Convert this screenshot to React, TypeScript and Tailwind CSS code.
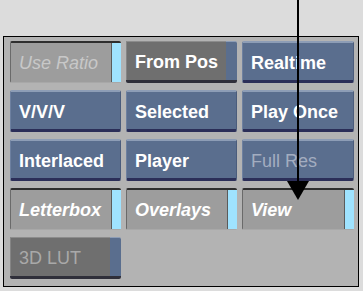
import React from "react";

type Kind = "blue" | "blueDim" | "toggleOff" | "toggleOn" | "pressed" | "pressedDim";

function Btn({ label, kind }: { label: string; kind: Kind }) {
  const font = { fontFamily: '"Liberation Sans", Arial, sans-serif' };
  if (kind === "blue" || kind === "blueDim") {
    return (
      <div
        className="h-[42px] rounded-[2px] bg-[#5a6e8e] border-t-2 border-t-[#8d9db6] border-b-[3px] border-b-[#2b2e58] border-l border-l-[#6d80a0] border-r border-r-[#4a5c7c] flex items-center pl-[8px] pt-[2px]"
        style={font}
      >
        <span
          className={
            "text-[18px] font-bold leading-none " +
            (kind === "blue" ? "text-white" : "text-[#a3adc0] font-normal")
          }
        >
          {label}
        </span>
      </div>
    );
  }
  if (kind === "toggleOff" || kind === "toggleOn") {
    return (
      <div className="h-[42px] flex rounded-[2px] border-t-2 border-t-[#2e2e2e] border-l border-l-[#6a6a6a] border-b border-b-[#a8a8a8]" style={font}>
        <div className="flex-1 bg-[#9d9d9d] flex items-center pl-[8px] pt-[1px]">
          <span
            className={
              "text-[18px] italic leading-none " +
              (kind === "toggleOn" ? "text-white font-bold" : "text-[#c8c8c8]")
            }
          >
            {label}
          </span>
        </div>
        <div className="w-[10px] bg-[#9fe3ff] border-l border-l-[#5b5b5b]" />
      </div>
    );
  }
  return (
    <div className="h-[42px] flex rounded-[2px] border-b-[3px] border-b-[#2f2f3a]" style={font}>
      <div className="flex-1 bg-[#6f6f6f] border-t border-t-[#8c8c8c] border-l border-l-[#858585] flex items-center pl-[8px] pt-[2px]">
        <span
          className={
            "text-[18px] leading-none " +
            (kind === "pressed" ? "text-white font-bold" : "text-[#a9a9a9]")
          }
        >
          {label}
        </span>
      </div>
      <div className="w-[11px] bg-[#5a6e8e] border-t border-t-[#8d9db6] rounded-tr-[2px]" />
    </div>
  );
}

export default function App() {
  return (
    <div className="relative w-[363px] h-[291px] bg-[#dcdcdc] overflow-hidden pt-[36px] pl-[3px]">
      <div className="w-[356px] h-[251px] border border-black bg-[#b3b3b3] pl-[6px] pt-[4px]">
        <div className="grid grid-cols-[111px_111px_112px] gap-x-[5px] gap-y-[7px]">
          <Btn label="Use Ratio" kind="toggleOff" />
          <Btn label="From Pos" kind="pressed" />
          <Btn label="Realtime" kind="blue" />
          <Btn label="V/V/V" kind="blue" />
          <Btn label="Selected" kind="blue" />
          <Btn label="Play Once" kind="blue" />
          <Btn label="Interlaced" kind="blue" />
          <Btn label="Player" kind="blue" />
          <Btn label="Full Res" kind="blueDim" />
          <Btn label="Letterbox" kind="toggleOn" />
          <Btn label="Overlays" kind="toggleOn" />
          <Btn label="View" kind="toggleOn" />
          <Btn label="3D LUT" kind="pressedDim" />
        </div>
      </div>
      <div className="absolute left-[297px] top-0 w-[2px] h-[183px] bg-black" />
      <svg className="absolute left-[287px] top-[181px]" width="22" height="19" viewBox="0 0 22 19">
        <polygon points="0,0 22,0 11,19" fill="black" />
      </svg>
    </div>
  );
}
